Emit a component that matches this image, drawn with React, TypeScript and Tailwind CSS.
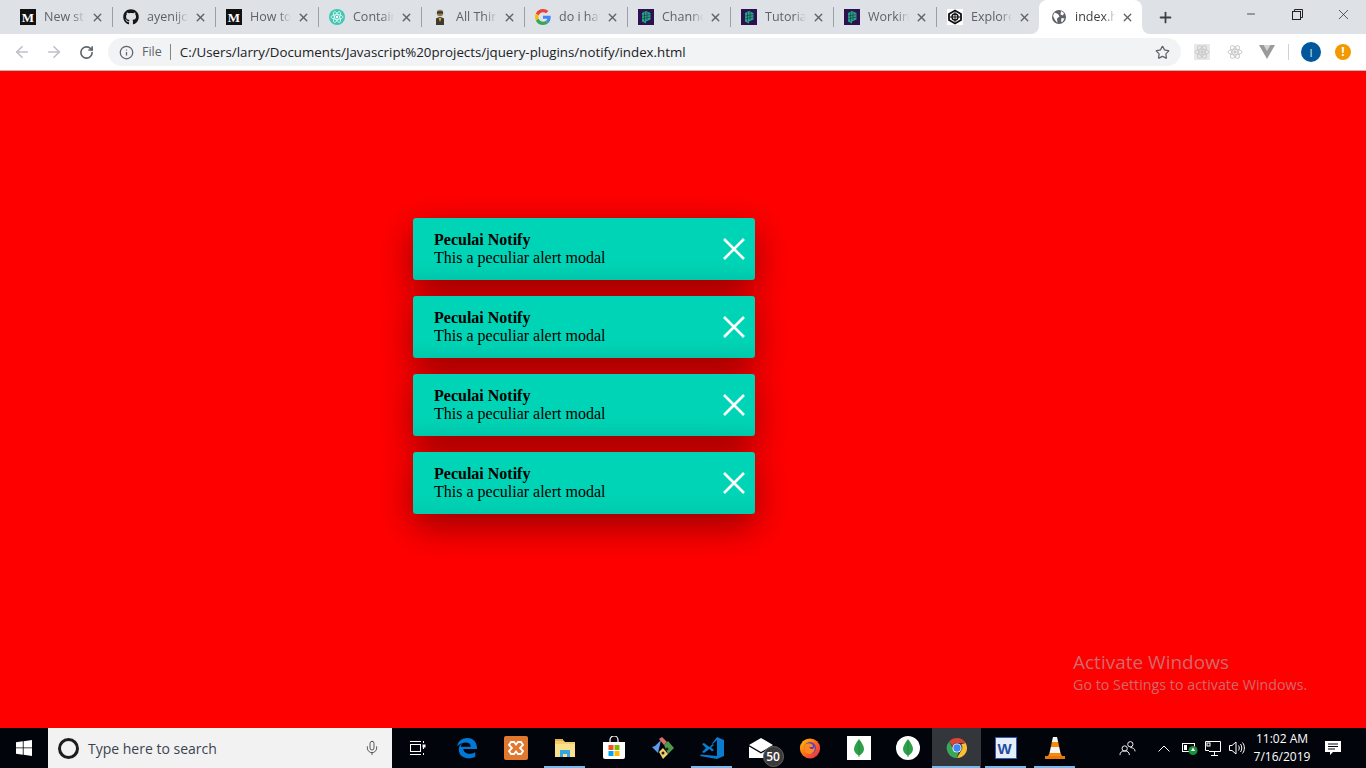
import { ArrowLeft, ArrowRight, RotateCw, Info, Star, X, Plus, Minus, Mic } from 'lucide-react'
import { FaGithub } from 'react-icons/fa'
import type { ReactNode } from 'react'

const MediumIcon = () => (
  <div className="w-4 h-4 bg-[#111] flex items-center justify-center text-white text-[13px] font-bold leading-none font-['Liberation_Serif',serif]">M</div>
)

const ReactGreenIcon = () => (
  <svg viewBox="0 0 16 16" className="w-4 h-4">
    <circle cx="8" cy="8" r="8" fill="#3fc7b4" />
    <g fill="none" stroke="#fff" strokeWidth="0.7">
      <ellipse cx="8" cy="8" rx="6" ry="2.4" />
      <ellipse cx="8" cy="8" rx="6" ry="2.4" transform="rotate(60 8 8)" />
      <ellipse cx="8" cy="8" rx="6" ry="2.4" transform="rotate(120 8 8)" />
    </g>
    <circle cx="8" cy="8" r="1.2" fill="#fff" />
  </svg>
)

const ButlerIcon = () => (
  <svg viewBox="0 0 16 16" className="w-4 h-4">
    <circle cx="8" cy="4" r="3.2" fill="#8a7a55" />
    <path d="M5 2.5h6v2H5z" fill="#3a3226" />
    <path d="M4 16V9.5Q8 6.5 12 9.5V16z" fill="#3f3a30" />
    <path d="M6.5 9h3L8 13z" fill="#e8a828" />
  </svg>
)

const GoogleIcon = () => (
  <svg viewBox="0 0 48 48" className="w-4 h-4">
    <path fill="#EA4335" d="M24 9.5c3.5 0 6.700 1.200 9.200 3.600l6.900-6.900C35.900 2.400 30.500 0 24 0 14.600 0 6.500 5.400 2.600 13.200l8 6.200C12.500 13.600 17.800 9.500 24 9.500z" />
    <path fill="#4285F4" d="M47 24.500c0-1.600-.1-3.100-.4-4.500H24v9h12.900c-.6 3-2.200 5.400-4.700 7.100l7.700 6C44.400 37.900 47 31.800 47 24.500z" />
    <path fill="#FBBC05" d="M10.600 28.600c-.5-1.400-.8-3-.8-4.600s.3-3.200.8-4.600l-8-6.200C.9 16.500 0 20.100 0 24s.9 7.500 2.600 10.800l8-6.200z" />
    <path fill="#34A853" d="M24 48c6.500 0 11.900-2.100 15.900-5.800l-7.700-6c-2.200 1.400-4.900 2.300-8.200 2.300-6.200 0-11.500-4.200-13.400-9.800l-8 6.200C6.500 42.600 14.600 48 24 48z" />
  </svg>
)

const PurpleIcon = () => (
  <svg viewBox="0 0 16 16" className="w-4 h-4">
    <rect width="16" height="16" fill="#2c1250" />
    <path d="M4 4 8 2l4.500 2v6.500L8 12.500V14.500L4 12.500z" fill="#1fa77f" />
    <path d="M6.500 3.500v9M9 3v8M4 7l8.500-1.500M4 9.800l8.500-1.800" stroke="#2c1250" strokeWidth="0.5" fill="none" />
  </svg>
)

const ExploreIcon = () => (
  <svg viewBox="0 0 16 16" className="w-4 h-4">
    <rect width="16" height="16" fill="#fff" />
    <path d="M8 1.500 14 5v6l-6 3.500L2 11V5z" fill="none" stroke="#111" strokeWidth="1.800" />
    <circle cx="8" cy="8" r="3" fill="none" stroke="#111" strokeWidth="1.400" />
    <path d="M8 3v10M3 8h10" stroke="#111" strokeWidth="1" />
  </svg>
)

const GlobeIcon = () => (
  <svg viewBox="0 0 16 16" className="w-4 h-4">
    <circle cx="8" cy="8" r="7" fill="#5f6368" />
    <path d="M3.500 3.500 7 5l1.500 2.500L6 9.500 6.500 14 4 11 2 7zM10 2l3 2-1 2.500-2.500-1zM10.500 9l3 .5-2 3.500-1.500-.500z" fill="#fff" />
  </svg>
)

const tabs: { label: string; icon: ReactNode }[] = [
  { label: 'New story', icon: <MediumIcon /> },
  { label: 'ayenijoe', icon: <FaGithub className="w-4 h-4 text-[#161616]" /> },
  { label: 'How to use', icon: <MediumIcon /> },
  { label: 'Containers', icon: <ReactGreenIcon /> },
  { label: 'All Things', icon: <ButlerIcon /> },
  { label: 'do i have', icon: <GoogleIcon /> },
  { label: 'Channels', icon: <PurpleIcon /> },
  { label: 'Tutorials', icon: <PurpleIcon /> },
  { label: 'Working', icon: <PurpleIcon /> },
  { label: 'Explore', icon: <ExploreIcon /> },
]

function Tab({ label, icon, active, last }: { label: string; icon: ReactNode; active?: boolean; last?: boolean }) {
  return (
    <div className={`relative flex items-center w-[103px] h-[34px] ${active ? 'pl-[12px] bg-white rounded-t-[8px]' : 'pl-[11px]'}`}>
      <div className="w-4 h-4 shrink-0">{icon}</div>
      <div className={`ml-2 w-[41px] overflow-hidden whitespace-nowrap text-[12.500px] [mask-image:linear-gradient(to_right,black_70%,transparent)] ${active ? 'text-[#3c4043]' : 'text-[#5f6368]'}`}>
        {label}
      </div>
      <X className={`${active ? 'ml-[5px]' : 'ml-[6px]'} w-[13px] h-[13px] text-[#5f6368] shrink-0`} strokeWidth={2.5} />
      {!active && !last && <div className="absolute right-[-1px] top-[7px] w-px h-[20px] bg-[#9aa0a6]" />}
      {active && (
        <>
          <svg viewBox="0 0 8 8" className="absolute left-[-8px] bottom-0 w-2 h-2" fill="#fff">
            <path d="M8 0v8H0a8 8 0 0 0 8-8z" />
          </svg>
          <svg viewBox="0 0 8 8" className="absolute right-[-8px] bottom-0 w-2 h-2" fill="#fff">
            <path d="M0 0v8h8a8 8 0 0 1-8-8z" />
          </svg>
        </>
      )}
    </div>
  )
}

function Browser() {
  return (
    <div className="font-['Open_Sans',sans-serif]">
      <div className="flex h-[34px] bg-[#dee1e6] pl-[9px]">
        {tabs.map((t, i) => (
          <Tab key={i} label={t.label} icon={t.icon} last={i === tabs.length - 1} />
        ))}
        <Tab label="index.html" icon={<GlobeIcon />} active />
        <div className="flex items-center justify-center w-[46px]">
          <Plus className="w-[17px] h-[17px] text-[#3c4043]" strokeWidth={2.5} />
        </div>
        <div className="ml-auto flex h-[28px]">
          <div className="w-[46px] flex items-center justify-center">
            <Minus className="w-[12px] h-[12px] text-[#222]" strokeWidth={1.5} />
          </div>
          <div className="w-[46px] flex items-center justify-center">
            <svg viewBox="0 0 11 11" className="w-[11px] h-[11px]" fill="none" stroke="#222" strokeWidth="1">
              <rect x="0.500" y="2.500" width="8" height="8" />
              <path d="M2.500 2.500V.5h8v8H8.500" />
            </svg>
          </div>
          <div className="w-[46px] flex items-center justify-center">
            <X className="w-[17px] h-[17px] text-[#222]" strokeWidth={1} />
          </div>
        </div>
      </div>
      <div className="flex items-center h-[36px] bg-white">
        <div className="w-[44px] flex justify-center">
          <ArrowLeft className="w-[18px] h-[18px] text-[#bdc1c6]" strokeWidth={2.2} />
        </div>
        <div className="w-[20px] flex justify-center">
          <ArrowRight className="w-[18px] h-[18px] text-[#bdc1c6]" strokeWidth={2.2} />
        </div>
        <div className="w-[44px] flex justify-center">
          <RotateCw className="w-[15px] h-[15px] text-[#5f6368]" strokeWidth={2.6} />
        </div>
        <div className="flex items-center w-[1073px] h-[28px] rounded-full bg-[#f1f3f4]">
          <Info className="ml-[11px] w-[15px] h-[15px] text-[#5f6368]" strokeWidth={2} />
          <span className="ml-[8px] pt-px text-[12.500px] text-[#5f6368]">File</span>
          <div className="ml-[8px] w-px h-[16px] bg-[#80868b]" />
          <span className="ml-[9px] pt-px text-[13.300px] text-[#202124] whitespace-nowrap">
            C:/Users/larry/Documents/Javascript%20projects/jquery-plugins/notify/index.html
          </span>
          <Star className="ml-auto mr-[11px] w-[15px] h-[15px] text-[#5f6368]" strokeWidth={2} />
        </div>
        <div className="flex items-center justify-center w-[42px]">
          <div className="w-4 h-4 bg-[#e8e8e8] flex items-center justify-center">
            <ReactGrey />
          </div>
        </div>
        <div className="flex items-center justify-center w-[24px]">
          <ReactGrey />
        </div>
        <div className="flex items-center justify-center w-[40px]">
          <svg viewBox="0 0 16 14" className="w-4 h-[14px]">
            <path d="M0 0h16L8 14z" fill="#9a9a9a" />
            <path d="M4.500 0h7L8 6z" fill="#d5d5d5" />
          </svg>
        </div>
        <div className="ml-px w-px h-[16px] bg-[#d0d2d5]" />
        <div className="ml-[12px] w-[20px] h-[20px] rounded-full bg-[#01579b] flex items-center justify-center text-[#dbe6f0] text-[11px] leading-none">I</div>
        <div className="ml-[14px] w-[16px] h-[16px] rounded-full bg-[#f29900] flex items-center justify-center text-white text-[12px] font-bold leading-none">!</div>
      </div>
      <div className="h-px bg-[#b8b8b8]" />
    </div>
  )
}

function ReactGrey() {
  return (
    <svg viewBox="0 0 16 16" className="w-4 h-4" fill="none" stroke="#c9c9c9" strokeWidth="1">
      <ellipse cx="8" cy="8" rx="7" ry="2.800" />
      <ellipse cx="8" cy="8" rx="7" ry="2.800" transform="rotate(60 8 8)" />
      <ellipse cx="8" cy="8" rx="7" ry="2.800" transform="rotate(120 8 8)" />
      <circle cx="8" cy="8" r="1.200" fill="#c9c9c9" />
    </svg>
  )
}

function Notify() {
  return (
    <div className="flex items-center justify-between w-[342px] h-[62px] pl-[21px] pr-[10px] rounded-[3px] bg-[linear-gradient(to_bottom,#00d4b6_70%,#00cbae)] shadow-[0_12px_36px_rgba(0,0,0,0.42)] font-['Liberation_Serif',serif] text-[16px] leading-[18px] text-black">
      <div>
        <div className="font-bold">Peculai Notify</div>
        <div>This a peculiar alert modal</div>
      </div>
      <svg viewBox="0 0 22 22" className="w-[22px] h-[22px]" stroke="#fff" strokeWidth="2.600">
        <path d="M1 1l20 20M21 1 1 21" />
      </svg>
    </div>
  )
}

function Taskbar() {
  const slots: { icon: ReactNode; mark?: 'open' | 'active' }[] = [
    { icon: <TaskView /> },
    { icon: <EdgeIcon /> },
    { icon: <XamppIcon /> },
    { icon: <ExplorerIcon />, mark: 'open' },
    { icon: <StoreIcon /> },
    { icon: <GitIcon /> },
    { icon: <VSCodeIcon />, mark: 'open' },
    { icon: <MailIcon /> },
    { icon: <FirefoxIcon /> },
    { icon: <div className="w-6 h-6 bg-white flex items-center justify-center"><LeafIcon /></div> },
    { icon: <div className="w-6 h-6 rounded-full bg-white flex items-center justify-center"><LeafIcon /></div> },
    { icon: <ChromeIcon />, mark: 'active' },
    { icon: <WordIcon />, mark: 'open' },
    { icon: <VlcIcon />, mark: 'open' },
  ]
  return (
    <div className="flex h-[40px] bg-[#02040b] font-['Open_Sans',sans-serif] text-white">
      <div className="w-[48px] flex items-center justify-center">
        <svg viewBox="0 0 16 16" className="w-4 h-4" fill="#fff">
          <path d="M0 2.300 6.800 1.300V7.500H0zM7.600 1.200 16 0V7.500H7.600zM0 8.300H6.800V14.700L0 13.700zM7.600 8.300H16V16L7.600 14.800z" />
        </svg>
      </div>
      <div className="flex items-center w-[344px] bg-[#f2f2f2]">
        <div className="ml-[10px] w-[21px] h-[21px] rounded-full border-[3px] border-[#1d1d1d]" />
        <span className="ml-[9px] text-[14px] text-[#3a4450] whitespace-nowrap">Type here to search</span>
        <Mic className="ml-auto mr-[12px] w-[16px] h-[16px] text-[#333]" strokeWidth={1.2} />
      </div>
      <div className="flex ml-px">
        {slots.map((s, i) => (
          <div key={i} className={`relative w-[49px] h-[40px] flex items-center justify-center ${s.mark === 'active' ? 'bg-[#33363b]' : ''}`}>
            {s.icon}
            {s.mark === 'active' && <div className="absolute left-0 right-px bottom-0 h-[2px] bg-[#76b9ed]" />}
            {s.mark === 'open' && <div className="absolute left-[4px] right-[4px] bottom-0 h-[2px] bg-[#76b9ed]" />}
          </div>
        ))}
      </div>
      <div className="flex items-center ml-[40px]">
        <svg viewBox="0 0 18 18" className="w-[17px] h-[17px]" fill="none" stroke="#fff" strokeWidth="1">
          <circle cx="6" cy="9" r="2.800" />
          <path d="M1 16c0-3 2-4.500 5-4.500s5 1.500 5 4.500" />
          <circle cx="12" cy="4.500" r="2.800" />
          <path d="M12 8c2.800 0 5 1.500 5 4" />
        </svg>
        <svg viewBox="0 0 12 7" className="ml-[22px] w-[12px] h-[7px]" fill="none" stroke="#fff" strokeWidth="1">
          <path d="M.5 6.500 6 1l5.500 5.500" />
        </svg>
        <svg viewBox="0 0 16 14" className="ml-[12px] w-[16px] h-[14px]">
          <rect x="0.500" y="2.500" width="12" height="8" fill="none" stroke="#fff" />
          <rect x="2" y="4" width="3" height="5" fill="#fff" />
          <circle cx="11" cy="9.500" r="4.500" fill="#1a8f3c" />
          <path d="M11 6.500 13 10H9z" fill="#fff" />
        </svg>
        <svg viewBox="0 0 16 15" className="ml-[7px] w-[16px] h-[15px]" fill="none" stroke="#fff" strokeWidth="1">
          <path d="M4 9.500H.5V.5h15v10H4M6 14.500h7M9.500 10.500v4" />
          <rect x="2" y="2" width="3" height="3" />
        </svg>
        <svg viewBox="0 0 16 14" className="ml-[8px] w-[16px] h-[14px]" fill="none" stroke="#fff" strokeWidth="1">
          <path d="M.5 4.500h2.500L7 1v12L3 9.500H.5zM9.500 4.500c1 1.500 1 3.500 0 5M11.500 3c1.700 2.300 1.700 5.700 0 8M13.500 1.500c2.500 3 2.500 8 0 11" />
        </svg>
        <div className="ml-[7px] w-[60px] text-center text-[12px] leading-[18px] whitespace-nowrap">
          <div>11:02 AM</div>
          <div>7/16/2019</div>
        </div>
        <svg viewBox="0 0 16 16" className="ml-[13px] w-4 h-4">
          <path d="M0 1h16v11H8l-3 3v-3H0z" fill="#fff" />
          <path d="M3 4h10M3 6.500h10M3 9h7" stroke="#02040b" strokeWidth="1" />
        </svg>
      </div>
    </div>
  )
}

const TaskView = () => (
  <svg viewBox="0 0 16 16" className="w-4 h-4" fill="none" stroke="#fff" strokeWidth="1">
    <rect x="0.500" y="4.500" width="10" height="7" />
    <path d="M0 1.500h11M0 14.500h11M13.500 1v2M13.500 7v2M13.500 13v2" />
    <rect x="13" y="5" width="2" height="2" fill="#fff" />
  </svg>
)
const EdgeIcon = () => (
  <svg viewBox="0 0 24 24" className="w-[22px] h-[22px]">
    <path fill="#0078d7" d="M1 11C2 4 7 1 12.500 1 19 1 23 5.500 23 13H8c.3 5 7 7 13 3.500v5c-7 3.500-18 1.500-18-8 0-3 1.500-5.500 5-7.500-2 1.500-2.500 3-2.700 4.500H16c0-5-7-6.500-15-.5z" />
  </svg>
)
const XamppIcon = () => (
  <svg viewBox="0 0 24 24" className="w-6 h-6">
    <rect width="24" height="24" rx="2" fill="#e0792f" />
    <path d="M7 6h3l2 2.500L14 6h3l2 3-3 3 3 3-2 3h-3l-2-2.500L10 18H7l-2-3 3-3-3-3z" fill="none" stroke="#fff" strokeWidth="1.800" />
  </svg>
)
const ExplorerIcon = () => (
  <svg viewBox="0 0 22 22" className="w-[22px] h-[22px]">
    <path d="M1 3h8l2 2h10v15H1z" fill="#f3cf6b" />
    <path d="M1 2h8v2H1z" fill="#e2b33f" />
    <path d="M1 7h20v13H1z" fill="#fbe08f" />
    <path d="M6 20v-7h10v7h-3v-3H9v3z" fill="#36a7dc" />
  </svg>
)
const StoreIcon = () => (
  <svg viewBox="0 0 24 24" className="w-[24px] h-[24px]">
    <path d="M8 6V4a4 4 0 0 1 8 0v2" fill="none" stroke="#fff" strokeWidth="1.200" />
    <path d="M1 6h22v15a2 2 0 0 1-2 2H3a2 2 0 0 1-2-2z" fill="#fff" />
    <rect x="6.500" y="9" width="5" height="5" fill="#f25022" />
    <rect x="12.500" y="9" width="5" height="5" fill="#7fba00" />
    <rect x="6.500" y="15" width="5" height="5" fill="#00a4ef" />
    <rect x="12.500" y="15" width="5" height="5" fill="#ffb900" />
  </svg>
)
const GitIcon = () => (
  <svg viewBox="0 0 24 24" className="w-6 h-6">
    <path d="M10 5 4 11l-3 1 6 6z" fill="#5d9cec" transform="translate(0 -1)" />
    <path d="M8 3l3-2 5 5-3 3z" fill="#e06c6c" />
    <path d="M13 9l4-4 6 7-6 6z" fill="#4f9a4a" />
    <path d="M8 16l4-4 5 6-5 5z" fill="#f2d16b" />
    <circle cx="16" cy="13" r="1.500" fill="#222" />
    <circle cx="12" cy="17" r="1.500" fill="#222" />
  </svg>
)
const VSCodeIcon = () => (
  <svg viewBox="0 0 24 24" className="w-6 h-6">
    <path fill="#0a7ccf" d="M17 1l7 3v16l-7 3L0 20l1-1.500L17 20V4L9.500 11 4 7 2 8l4 4-4 4 2 1 5.500-4 2.500 2.500 2-1.500-3-2.500 3-2.500-2-1.500z" />
  </svg>
)
const MailIcon = () => (
  <div className="relative">
    <svg viewBox="0 0 24 20" className="w-6 h-5">
      <path d="M0 7 12 0l12 7-12 7z" fill="#fff" />
      <path d="M0 8.500 12 15.500 24 8.500V20H0z" fill="#fff" />
    </svg>
    <div className="absolute left-[14px] top-[8px] w-[21px] h-[21px] rounded-full bg-[#3a3a3a] border border-[#666] flex items-center justify-center text-[12px] font-semibold leading-none">50</div>
  </div>
)
const FirefoxIcon = () => (
  <svg viewBox="0 0 24 24" className="w-[22px] h-[22px]">
    <defs>
      <linearGradient id="ff" x1="0" y1="0" x2="1" y2="1">
        <stop offset="0" stopColor="#ffcb00" />
        <stop offset="0.5" stopColor="#ff6a1a" />
        <stop offset="1" stopColor="#e3215c" />
      </linearGradient>
    </defs>
    <circle cx="12" cy="12.500" r="11" fill="url(#ff)" />
    <circle cx="12" cy="12" r="6.500" fill="#5a3fc4" />
    <path d="M7 8c3-2 7-1 8 1s-1 2-3 2 1 3 3 2 2-3 1-5 3 4 0 8-9 3-10-1 0-5 1-7z" fill="#ff8a1f" />
  </svg>
)
const LeafIcon = () => (
  <svg viewBox="0 0 10 18" className="w-[10px] h-[18px]">
    <path d="M5 0C2 4 0 7 0 10s2 5 4.500 6.500V18h1v-1.500C8 15 10 13 10 10S8 4 5 0z" fill="#2fa04a" />
    <path d="M5 2v14" stroke="#1c7a35" strokeWidth="0.6" />
  </svg>
)
const ChromeIcon = () => (
  <svg viewBox="0 0 24 24" className="w-[22px] h-[22px]">
    <path d="M12 1a11 11 0 0 1 9.500 5.500H12A5.500 5.500 0 0 0 7 9.800L3.500 4.800A11 11 0 0 1 12 1z" fill="#db4437" />
    <path d="M21.500 6.500A11 11 0 0 1 12 23l4.700-8.200A5.500 5.500 0 0 0 16.500 8z" fill="#fbc02d" />
    <path d="M12 23A11 11 0 0 1 3.500 4.800L7.800 13a5.500 5.500 0 0 0 5.700 4z" fill="#3aa757" />
    <circle cx="12" cy="12" r="5" fill="#fff" />
    <circle cx="12" cy="12" r="4" fill="#4285f4" />
  </svg>
)
const WordIcon = () => (
  <div className="w-[22px] h-[22px] bg-[#e8eef7] border border-[#2b5fb4] flex items-center justify-start pl-[2px] text-[#1d4fa3] text-[15px] font-bold leading-none font-['Liberation_Sans',sans-serif]">W</div>
)
const VlcIcon = () => (
  <svg viewBox="0 0 20 22" className="w-5 h-[22px]">
    <path d="M8 0h4l1.200 5H6.800z" fill="#f5f5f5" />
    <path d="M6.800 5h6.400l1 5H5.800z" fill="#f58a0b" />
    <path d="M5.800 10h8.400l1.300 6h-11z" fill="#f5f5f5" />
    <path d="M4.500 16h11L17 19H3z" fill="#f58a0b" />
    <path d="M0 19h20v3H0z" fill="#e9760a" />
  </svg>
)

export default function App() {
  return (
    <div className="relative flex flex-col w-[1366px] h-[768px] overflow-hidden bg-[#ff0000]">
      <Browser />
      <main className="flex-1 flex flex-col gap-4 pl-[413px] pt-[147px]">
        <Notify />
        <Notify />
        <Notify />
        <Notify />
      </main>
      {/* Windows watermark sits on top of the page */}
      <div className="absolute left-[1073px] top-[649px] text-[#d06a6a] font-['Open_Sans',sans-serif] whitespace-nowrap">
        <div className="text-[19px] leading-[26px]">Activate Windows</div>
        <div className="text-[14.300px] leading-[18px] mt-px">Go to Settings to activate Windows.</div>
      </div>
      <Taskbar />
    </div>
  )
}
